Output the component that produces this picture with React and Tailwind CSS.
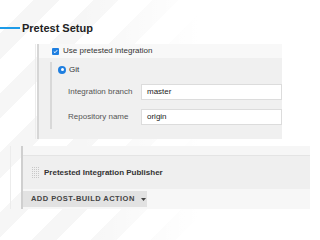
function Handle() {
  const dots = [];
  for (let r = 0; r < 6; r++) {
    for (let c = 0; c < 4; c++) {
      dots.push(<rect key={`${r}-${c}`} x={c * 2} y={r * 2} width="1" height="1" fill="#c8c8c8" />);
    }
  }
  return (
    <svg width="7" height="11" viewBox="0 0 7 11" className="shrink-0">
      {dots}
    </svg>
  );
}

function Field({ label, value }) {
  return (
    <div className="flex h-[16px] items-center">
      <span className="w-[89px] shrink-0 whitespace-nowrap pl-[16px] text-[8px] text-[#555]">{label}</span>
      <div className="flex h-[16px] flex-1 items-center border border-[#dcdcdc] bg-white pl-[5px] text-[8px] text-[#222]">
        {value}
      </div>
    </div>
  );
}

export default function App() {
  return (
    <div className="relative h-[240px] w-[320px] overflow-hidden bg-white bg-[linear-gradient(to_right,rgba(255,255,255,0)_0%,rgba(255,255,255,0)_25%,#fff_62%),repeating-linear-gradient(135deg,#ffffff_0px,#ffffff_24px,#f6f6f6_24px,#f6f6f6_42px)] font-['Liberation_Sans',Arial,sans-serif] text-[#333]">
      <div className="mt-[21px] flex h-[14px] items-center">
        <div className="h-[2px] w-[20px] bg-[#1d9be8]" />
        <span className="ml-[2px] text-[11px] font-bold text-[#222]">Pretest Setup</span>
      </div>

      {/* Pretest integration block */}
      <div className="ml-[35px] mt-[9px] w-[247px] border-l border-[#ececec] pl-[1px]">
        <div className="border-l-2 border-[#d6d6d6]">
          <div className="flex h-[14px] items-center bg-[#f8f8f8] pl-[13px]">
            <span className="flex h-[7px] w-[7px] items-center justify-center rounded-[1px] bg-[#1f7fe0]">
              <svg width="5" height="5" viewBox="0 0 5 5">
                <path d="M0.8 2.6 L2 3.7 L4.2 1.2" stroke="#fff" strokeWidth="1" fill="none" />
              </svg>
            </span>
            <span className="ml-[4px] text-[8px] text-[#333]">Use pretested integration</span>
          </div>
          <div className="bg-[#f0f0f0] pb-[10px] pl-[11px] pt-[4px]">
            <div className="border-l-2 border-[#d8d8d8] pb-[4px]">
              <div className="flex h-[15px] items-center pl-[6px]">
                <span className="flex h-[8px] w-[8px] items-center justify-center rounded-full bg-[#1f7fe0]">
                  <span className="h-[3px] w-[3px] rounded-full bg-white" />
                </span>
                <span className="ml-[3px] text-[8px] text-[#333]">Git</span>
              </div>
              <div className="mt-[7px] flex flex-col gap-[9px]">
                <Field label="Integration branch" value="master" />
                <Field label="Repository name" value="origin" />
              </div>
            </div>
          </div>
        </div>
      </div>

      {/* Post-build block */}
      <div className="ml-[10px] mt-[7px] w-[300px] border-l border-[#ececec] pl-[10px]">
        <div className="border-l-2 border-[#cfcfcf]">
          <div className="h-[10px] border-b border-[#e4e4e4] bg-[#f6f6f6]" />
          <div className="flex h-[33px] items-center bg-[#efefef] pl-[9px]">
            <Handle />
            <span className="ml-[5px] text-[8px] font-bold text-[#333]">Pretested Integration Publisher</span>
          </div>
          <div className="h-[20px] bg-[#f7f7f7] pt-[2px]">
            <div className="flex h-[16px] w-[124px] items-center bg-[#e2e2e2] pl-[8px] text-[7.5px] font-bold tracking-[0.45px] text-[#444]">
              ADD POST-BUILD ACTION
              <svg width="5" height="3" viewBox="0 0 5 3" className="ml-[6px]">
                <path d="M0 0 H5 L2.5 3 Z" fill="#444" />
              </svg>
            </div>
          </div>
        </div>
      </div>
    </div>
  );
}
